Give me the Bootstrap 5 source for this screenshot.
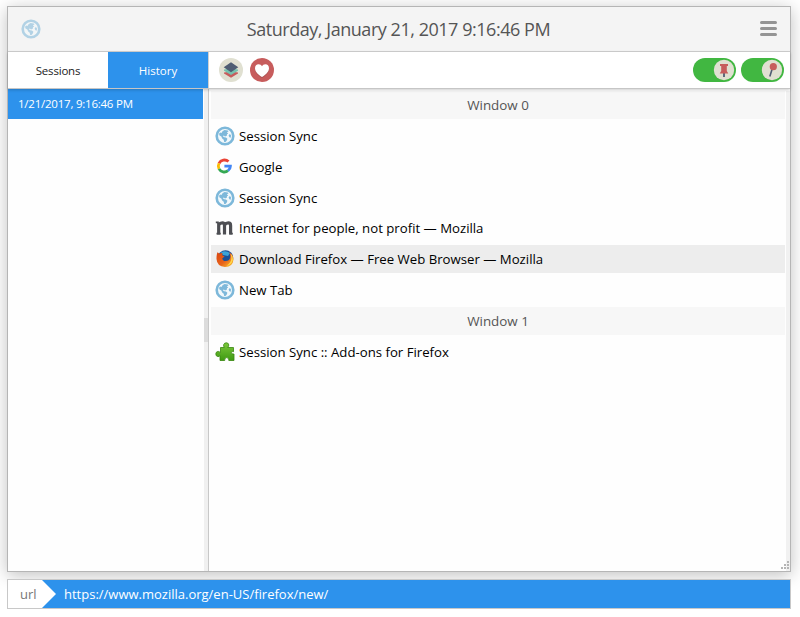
<!DOCTYPE html>
<html lang="en">
<head>
<meta charset="utf-8">
<title>Session Sync</title>
<link href="https://cdn.jsdelivr.net/npm/bootstrap@5.3.0/dist/css/bootstrap.min.css" rel="stylesheet">
<style>
body{font-family:"Open Sans","Noto Sans",sans-serif;background:#fff;font-size:13.2px;line-height:20px;color:#000;padding:6px 9px 0 7px;overflow:hidden}
svg{display:block;flex:none}
.panel{height:566px;border:1px solid #b5b5b5;box-shadow:0 3px 16px rgba(0,0,0,.25);background:#fefefe}
.topbar{height:45px;background:#f4f4f4;border-bottom:1px solid #d0d0d0;padding:0 13px 1px 13px}
.topbar h1{font-size:18px;letter-spacing:-.46px;color:#555;line-height:24px;font-weight:400;padding-right:4px}
.tools{height:37px;border-bottom:1px solid #c6c6c6;background:#fff;z-index:1;box-shadow:0 1px 3px rgba(0,0,0,.2)}
.tabs{width:201px;border-right:1px solid #d0d0d0}
.tabs .nav-link{width:100px;border-radius:0;padding:1px 0 0;font-size:11.5px;letter-spacing:-.2px;color:#222;text-align:center;line-height:35px}
.tabs .nav-link.active{background:#2d92ec;color:#fff;letter-spacing:0}
.actions{padding:0 6px 0 10px}
.round-set{gap:7px}
.toggle-set{gap:5px}
.side{width:196px}
.side .entry{width:195px;height:30px;background:#2d92ec;color:#fff;font-size:11.5px;letter-spacing:-.23px;line-height:29px;padding-left:10px}
.gutter{width:5px;background:#f0f0f0;border-right:1px solid #c8c8c8}
.grip{width:4px;height:24px;background:#dcdcdc;margin-top:229px}
.listing{padding:2px 0 0 2px}
.line{height:28px;margin-bottom:2.86px;padding-left:4px;gap:4px}
.icon-cell{width:20px}
.win{background:#f7f7f7;color:#555;font-size:13.4px;padding:0}
.hover{background:#ededed}
.edge{width:4px;background:#f1f1f1;margin-top:2px}
.grow-line{width:574px}
.corner{right:1px;bottom:1px}
.urlbar{height:30px;margin-top:7px;border:1px solid #c8c8c8;background:#2d92ec;color:#fff;font-size:13px}
.tag{width:48px;padding-left:12px;background:#fff;color:#777;clip-path:polygon(0 0,34px 0,100% 50%,34px 100%,0 100%)}
</style>
</head>
<body>
<svg width="0" height="0" class="position-absolute" aria-hidden="true">
  <symbol id="globe" viewBox="0 0 20 20">
    <circle cx="10" cy="10" r="8.300" fill="#f2f8fb" stroke="#7db8da" stroke-width="2.600"/>
    <path d="M4 7.800 5.300 6.500 6.500 7 7.500 5.200 9.500 4 12.800 4.400 13.500 5.500 11.800 6.300 13.200 7.500 12 8.300 11.800 9.800 10 10.600 8.800 9.600 7.800 10.300 9.200 11.300 11 11.600 12.400 12.800 11.800 14.500 10.500 16 9.200 15.900 8.700 13.800 7.200 12.500 6.300 10.600 4.500 9.600ZM14.800 8 16 9.200 15.700 11.800 14.400 11.300 13.600 9.500Z" fill="#7db8da"/>
  </symbol>
</svg>

<main class="panel d-flex flex-column position-relative">
  <header class="topbar d-flex align-items-center justify-content-between flex-shrink-0">
    <svg width="20" height="20" opacity=".55"><use href="#globe"/></svg>
    <h1 class="m-0">Saturday, January 21, 2017 9:16:46 PM</h1>
    <svg width="17" height="17" viewBox="0 0 17 17"><path d="M1.500 2.500h14M1.500 8.500h14M1.500 14.500h14" stroke="#949494" stroke-width="3" stroke-linecap="round"/></svg>
  </header>

  <div class="tools d-flex position-relative flex-shrink-0">
    <nav class="tabs nav nav-pills flex-nowrap">
      <a class="nav-link" href="#">Sessions</a>
      <a class="nav-link active" href="#">History</a>
    </nav>
    <div class="actions d-flex align-items-center justify-content-between flex-grow-1">
      <div class="round-set d-flex">
        <svg width="24" height="24" viewBox="0 0 24 24"><circle cx="12" cy="12" r="12" fill="#e0e0d1"/><path d="m5 14.500 7-1 7 1v1L12 19.800 5 15.500Z" fill="#c75c5c"/><path d="m5 11.500 7-1 7 1v1.300L12 17 5 12.800Z" fill="#76c2af"/><path d="m4.700 9.200 7.300-4.900 7.300 4.900L12 14.200Z" fill="#4f5d73"/></svg>
        <svg width="24" height="24" viewBox="0 0 24 24"><circle cx="12" cy="12" r="12" fill="#c75c5c"/><path d="M12 20C8.500 18 5 15 5 11.300 5 8.600 6.500 7.200 8.600 7.200 10.200 7.200 11.400 8 12 9.200 12.600 8 13.800 7.200 15.400 7.200 17.500 7.200 19 8.600 19 11.300 19 15 15.500 18 12 20Z" fill="#8d4a4a" opacity=".5"/><path d="M12 19C8.500 17 5 14 5 10.300 5 7.600 6.500 6.200 8.600 6.200 10.200 6.200 11.400 7 12 8.200 12.600 7 13.800 6.200 15.400 6.200 17.500 6.200 19 7.600 19 10.300 19 14 15.500 17 12 19Z" fill="#fff"/></svg>
      </div>
      <div class="toggle-set d-flex">
        <svg width="43" height="24" viewBox="0 0 43 24"><rect width="43" height="24" rx="12" fill="#41b741"/><circle cx="31" cy="12" r="10.200" fill="#e0e0d1"/><path d="M31 14v5" stroke="#4f5d73" stroke-width="1.800"/><path d="M27 6h8v2h-1.200v5l1.500 2.500h-8.600l1.500-2.500V8H27Z" fill="#c75c5c"/></svg>
        <svg width="43" height="24" viewBox="0 0 43 24"><rect width="43" height="24" rx="12" fill="#41b741"/><circle cx="31" cy="12" r="10.200" fill="#e0e0d1"/><path d="m31.500 10-2.700 8.500" stroke="#4f5d73" stroke-width="1.600"/><circle cx="32.300" cy="8.700" r="3.600" fill="#c75c5c"/></svg>
      </div>
    </div>
  </div>

  <div class="d-flex flex-grow-1">
    <aside class="side"><div class="entry">1/21/2017, 9:16:46 PM</div></aside>
    <div class="gutter"><div class="grip"></div></div>
    <section class="listing flex-grow-1">
      <div class="grow-line">
        <div class="line win d-flex align-items-center justify-content-center">Window 0</div>
        <div class="line d-flex align-items-center"><div class="icon-cell"><svg width="20" height="20"><use href="#globe"/></svg></div>Session Sync</div>
        <div class="line d-flex align-items-center"><div class="icon-cell"><svg width="20" height="20" viewBox="0.600 0.300 20 20" fill="none" stroke-width="2.800"><path d="M4.600 6.700A6 6 0 0 1 14.100 4.900" stroke="#ea4335"/><path d="M4.600 6.700a6 6 0 0 0 0 5.400" stroke="#fbbc05"/><path d="M4.600 12.100a6 6 0 0 0 9 1.900" stroke="#34a853"/><path d="M10 9.400h6A6 6 0 0 1 13.600 14" stroke="#4285f4"/></svg></div>Google</div>
        <div class="line d-flex align-items-center"><div class="icon-cell"><svg width="20" height="20"><use href="#globe"/></svg></div>Session Sync</div>
        <div class="line d-flex align-items-center"><div class="icon-cell"><svg width="20" height="20" viewBox="0 0 20 20" fill="none" stroke="#4d4e53"><path d="M3.700 16.500V4.500M9.500 16.500V7.500Q9.500 4.900 7.300 4.900 5 4.900 3.700 7M15.600 16.500V7.500Q15.600 4.900 13.300 4.900 11 4.900 9.500 7" stroke-width="3.200"/><path d="M.8 4.400h3M1.500 15.600h4.200M14.500 15.600H17.800" stroke-width="1.800"/></svg></div>Internet for people, not profit — Mozilla</div>
        <div class="line hover d-flex align-items-center"><div class="icon-cell"><svg width="20" height="20" viewBox="0 0 20 20"><defs><linearGradient id="fox" x1="0" y1="0" x2="1" y2="1"><stop offset="0" stop-color="#d9440f"/><stop offset=".55" stop-color="#e8641b"/><stop offset="1" stop-color="#ffcb2e"/></linearGradient></defs><circle cx="10.500" cy="9" r="7.700" fill="#1b4f96"/><path d="M6 3.500Q10 .7 15 4L13 7 8 6Z" fill="#3aa3d8"/><path d="M2.500 3.200 4.500 4.700Q6 3.900 7.500 4.200L7.200 6.200 9.600 7.600 7.300 9.200Q7.500 12 10.500 12 14.500 12 15.200 8.500 15.500 5.500 14 3.200 18.700 5.500 18.500 10.500 17.800 18 10 18 2 17.500 1.500 10 1.400 6 2.500 3.200Z" fill="url(#fox)"/><path d="M15.500 4.500Q18.500 7 17.700 11.500 16.300 16 11.500 16.800 16 14 16.300 9.500 16.400 6.500 15.500 4.500Z" fill="#ffd84a"/></svg></div>Download Firefox — Free Web Browser — Mozilla</div>
        <div class="line d-flex align-items-center"><div class="icon-cell"><svg width="20" height="20"><use href="#globe"/></svg></div>New Tab</div>
        <div class="line win d-flex align-items-center justify-content-center">Window 1</div>
        <div class="line d-flex align-items-center"><div class="icon-cell"><svg width="20" height="20" viewBox="0 0 20 20"><defs><linearGradient id="leaf" x1="0" y1="0" x2="0" y2="1"><stop offset="0" stop-color="#7cc83c"/><stop offset="1" stop-color="#3f9a12"/></linearGradient></defs><path d="M5.500 5.500H9.300Q8.300 4.200 8.700 2.500 9.500.6 11.500.8 13.700 1 13.800 3 13.700 4.500 12.700 5.500H18.500V9.700Q17 9.200 16.300 10.500 16.200 12.500 19 12V18.500H13.800Q14.300 16 11.700 15.600 9.200 16 9.700 18.500H5V13.500Q4.200 15 2.500 14.500.6 14 .8 11.700 1.200 9.300 3.200 9.400 4.500 9.600 5.500 10.500Z" fill="url(#leaf)" stroke="#38870f" stroke-width=".8"/></svg></div>Session Sync :: Add-ons for Firefox</div>
      </div>
    </section>
    <div class="edge"></div>
  </div>
  <svg class="corner position-absolute" width="9" height="9" viewBox="0 0 9 9"><path d="M7 0h2v2H7ZM4 3h2v2H4ZM7 3h2v2H7ZM1 6h2v2H1ZM4 6h2v2H4ZM7 6h2v2H7Z" fill="#b5b5b5"/></svg>
</main>

<footer class="urlbar d-flex position-relative">
  <div class="tag d-flex align-items-center">url</div>
  <div class="d-flex align-items-center ps-2">https://www.mozilla.org/en-US/firefox/new/</div>
</footer>
</body>
</html>
